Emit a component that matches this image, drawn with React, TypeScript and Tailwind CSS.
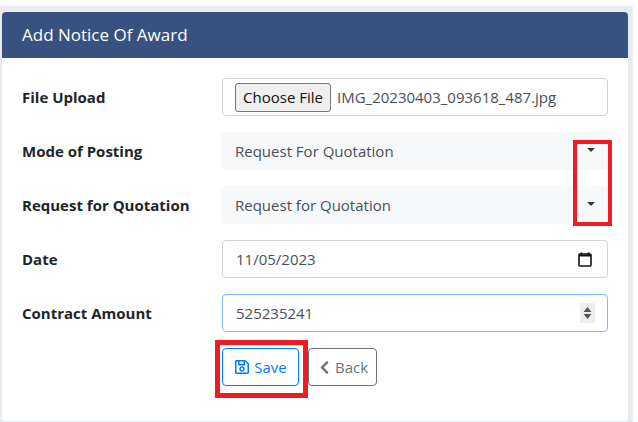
import { FaChevronLeft, FaRegSave } from 'react-icons/fa';

const font = { fontFamily: '"Open Sans", "Noto Sans", sans-serif' };

// Select rows share the grey bootstrap look
const SelectRow = ({ label, value }: { label: string; value: string }) => (
  <div className="flex items-center">
    <label className="w-[200px] text-[15px] font-bold text-[#212529]">{label}</label>
    <div className="flex h-[38px] w-[386px] items-center justify-between rounded-[4px] bg-[#f7f8fa] pl-[13px] pr-[13px] text-[15px] text-[#495057]">
      <span>{value}</span>
      <span className="mb-[2px] h-0 w-0 border-x-[4px] border-t-[4px] border-x-transparent border-t-[#343a40]"></span>
    </div>
  </div>
);

const App = () => {
  return (
    <div style={font} className="relative h-[422px] w-[638px] overflow-hidden bg-white">
      <div className="mt-[6px] h-[416px] w-[633px] bg-[#e9ecef] pl-[2px] pr-[5px] pt-[6px]">
        <div className="h-[409px] overflow-hidden rounded-[4px] bg-white">
          {/* Card header */}
          <div className="flex h-[46px] items-center bg-[#375280] pb-[1px] pl-[20px] text-[17px] text-white">
            Add Notice Of Award
          </div>

          {/* Form */}
          <div className="flex flex-col gap-[16px] pl-[20px] pt-[20px]">
            <div className="flex items-center">
              <label className="w-[200px] text-[15px] font-bold text-[#212529]">File Upload</label>
              <div className="flex h-[38px] w-[386px] items-center rounded-[4px] border border-[#ced4da] pl-[12px] text-[15px] text-[#495057]">
                <span className="flex h-[29px] w-[96px] items-center justify-center rounded-[3px] border border-[#767676] bg-[#efefef] text-[#111]">
                  Choose File
                </span>
                <span className="ml-[6px]">IMG_20230403_093618_487.jpg</span>
              </div>
            </div>

            <SelectRow label="Mode of Posting" value="Request For Quotation" />
            <SelectRow label="Request for Quotation" value="Request for Quotation" />

            <div className="flex items-center">
              <label className="w-[200px] text-[15px] font-bold text-[#212529]">Date</label>
              <div className="flex h-[38px] w-[386px] items-center justify-between rounded-[4px] border border-[#ced4da] pl-[13px] pr-[15px] text-[15px] text-[#495057]">
                <span>11/05/2023</span>
                <svg width="14" height="15" viewBox="0 0 14 15" fill="none">
                  <path d="M3.5 0.5v2M10.5 0.5v2" stroke="#111" strokeWidth="2" />
                  <rect x="1" y="2" width="12" height="12" rx="1" stroke="#111" strokeWidth="1.6" />
                  <path d="M1 3.5h12" stroke="#111" strokeWidth="2" />
                </svg>
              </div>
            </div>

            <div className="flex items-center">
              <label className="w-[200px] text-[15px] font-bold text-[#212529]">Contract Amount</label>
              <div className="flex h-[38px] w-[386px] items-center justify-between rounded-[4px] border border-[#80bdff] pl-[13px] pr-[12px] text-[15px] text-[#495057]">
                <span>525235241</span>
                <svg width="15" height="20" viewBox="0 0 15 20">
                  <rect width="15" height="20" fill="#efefef" />
                  <path d="M7.5 4l4 5h-8zM7.5 16l-4-5h8z" fill="#555" />
                </svg>
              </div>
            </div>

            {/* Buttons */}
            <div className="flex gap-[9px] pl-[200px]">
              <button className="flex h-[38px] w-[77px] items-center justify-center gap-[4px] rounded-[4px] border border-[#007bff] text-[15px] text-[#007bff]">
                <FaRegSave size={16} />
                Save
              </button>
              <button className="flex h-[38px] w-[69px] items-center justify-center gap-[3px] rounded-[4px] border border-[#6c757d] text-[15px] text-[#6c757d]">
                <FaChevronLeft size={15} />
                Back
              </button>
            </div>
          </div>
        </div>
      </div>

      {/* Red annotation boxes */}
      <div className="absolute left-[573px] top-[140px] h-[86px] w-[39px] border-[4px] border-[#ed1c24]"></div>
      <div className="absolute left-[215px] top-[340px] h-[58px] w-[93px] border-[5px] border-[#ed1c24]"></div>
    </div>
  );
};

export default App;
